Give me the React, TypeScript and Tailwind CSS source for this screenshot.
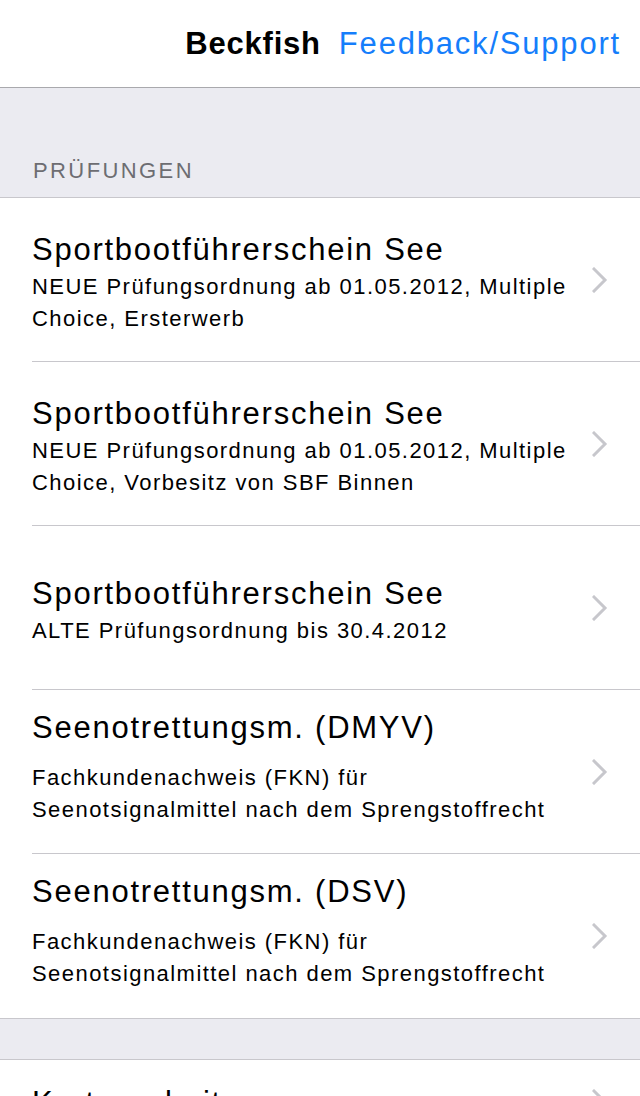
import React from "react";

type Row = { title: string; sub: string[]; gap?: boolean };

const rows: Row[] = [
  { title: "Sportbootführerschein See", sub: ["NEUE Prüfungsordnung ab 01.05.2012, Multiple", "Choice, Ersterwerb"] },
  { title: "Sportbootführerschein See", sub: ["NEUE Prüfungsordnung ab 01.05.2012, Multiple", "Choice, Vorbesitz von SBF Binnen"] },
  { title: "Sportbootführerschein See", sub: ["ALTE Prüfungsordnung bis 30.4.2012"] },
  { title: "Seenotrettungsm. (DMYV)", sub: ["Fachkundenachweis (FKN) für", "Seenotsignalmittel nach dem Sprengstoffrecht"], gap: true },
  { title: "Seenotrettungsm. (DSV)", sub: ["Fachkundenachweis (FKN) für", "Seenotsignalmittel nach dem Sprengstoffrecht"], gap: true },
];

function Chevron() {
  return (
    <svg width="16" height="26" viewBox="0 0 16 26" className="shrink-0">
      <path d="M2 2 L13 13 L2 24" fill="none" stroke="#c7c7cc" strokeWidth="3" strokeLinecap="square" />
    </svg>
  );
}

export default function App() {
  return (
    <div className="w-[640px] h-[1096px] overflow-hidden bg-white" style={{ fontFamily: '"Liberation Sans", Arial, sans-serif' }}>
      <div className="h-[88px] flex items-center justify-end pr-[19px] pt-[2px] gap-[18px] border-b border-[#a9a9ad]">
        <span className="text-[31px] font-bold text-black tracking-[0.8px]">Beckfish</span>
        <span className="text-[31px] text-[#157efb] tracking-[1.8px]">Feedback/Support</span>
      </div>
      <div className="h-[110px] bg-[#ebebf1] flex items-end px-[33px] pb-[15px] border-b border-[#c8c7cc]">
        <span className="text-[22px] text-[#6d6d72] leading-none tracking-[2.4px]">PRÜFUNGEN</span>
      </div>
      <div>
        {rows.map((r, i) => (
          <div key={i} className="relative h-[164px] flex items-center pl-[32px] pr-[32px]">
            <div className={`flex-1 flex flex-col ${r.gap ? "mb-[12px]" : "mt-[4px]"}`}>
              <div className={`text-[31px] leading-[42px] text-black tracking-[1.75px] ${r.gap ? "mb-[13px]" : ""}`}>{r.title}</div>
              {r.sub.map((s, j) => (
                <div key={j} className="text-[22px] leading-[32px] text-black tracking-[1.45px]">{s}</div>
              ))}
            </div>
            <Chevron />
            {i < rows.length - 1 && <div className="absolute left-[32px] right-0 bottom-0 h-px bg-[#c8c7cc]" />}
          </div>
        ))}
      </div>
      <div className="h-[42px] bg-[#ebebf1] border-y border-[#c8c7cc]" />
      <div className="relative h-[164px] flex items-start pl-[32px] pr-[32px] pt-[25px]">
        <div className="flex-1 text-[31px] leading-[36px] text-black tracking-[1.75px]">Kartenarbeit</div>
        <div className="mt-[4px]"><Chevron /></div>
      </div>
    </div>
  );
}
